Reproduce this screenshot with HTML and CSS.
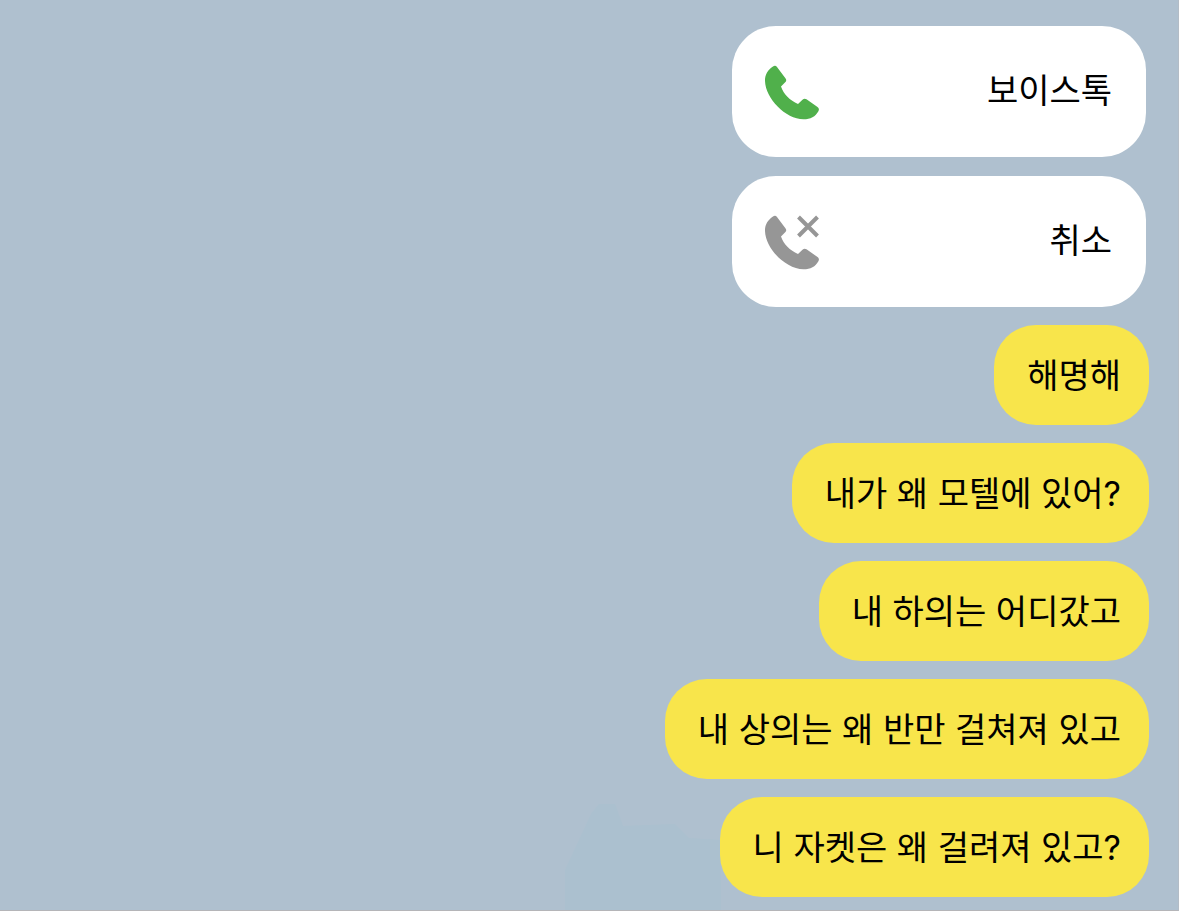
FILE: index.html
```html
<!DOCTYPE html>
<html lang="ko">
<head>
  <meta charset="UTF-8" />
  <meta name="viewport" content="width=device-width, initial-scale=1.0"/>
  <title>채팅</title>

  <link rel="stylesheet" href="styles.css">
</head>
<body>
  <svg class="scenery" viewBox="0 0 156 108" aria-hidden="true">
    <path d="M0 108V68L14 38 26 12 34 2h16l8 22 52-2 14 14 32 2v70z"/>
  </svg>

  <main class="chat">
    <div class="calls">
      <div class="call">
        <svg class="icon green" viewBox="0 0 56 56" aria-hidden="true">
          <path d="M9 1.5C10.5.5 12 .7 13 2l8.600 11.500c1 1.400.8 2.600-.4 3.800L17 21.500C19.500 29 26 35.500 34 39l4.500-4.300c1.300-1.200 2.600-1.200 4-.4L53.500 42c1.600 1.200 1.800 2.600.9 4.200C51.500 51.500 46.500 54.300 39.500 54.300 21.500 54 1.500 33.500 1 16 .8 9.500 4 4.800 9 1.500z"/>
        </svg>
        <span>보이스톡</span>
      </div>
      <div class="call">
        <svg class="icon gray" viewBox="0 0 56 56" aria-hidden="true">
          <path d="M9 1.500C10.500.500 12 .7 13 2l8.600 11.500c1 1.400.8 2.600-.4 3.800L17 21.500C19.500 29 26 35.500 34 39l4.500-4.300c1.300-1.200 2.600-1.200 4-.4L53.500 42c1.600 1.200 1.800 2.600.9 4.200C51.500 51.500 46.500 54.300 39.500 54.300 21.500 54 1.500 33.500 1 16 .8 9.500 4 4.800 9 1.500z"/>
          <path class="cross" d="M34.500 2l19 19M53.500 2l-19 19"/>
        </svg>
        <span>취소</span>
      </div>
    </div>

    <p class="bubble">해명해</p>
    <p class="bubble">내가 왜 모텔에 있어?</p>
    <p class="bubble">내 하의는 어디갔고</p>
    <p class="bubble">내 상의는 왜 반만 걸쳐져 있고</p>
    <p class="bubble">니 자켓은 왜 걸려져 있고?</p>
  </main>
</body>
</html>
```

FILE: styles.css
```css
* {
  box-sizing: border-box;
}

body {
  margin: 0;
  min-height: 100vh;
  position: relative;
  background-color: #afc0cf;
  border-right: 1px solid #b3bcc6;
  border-bottom: 1px solid #b5b5b8;
  color: #000;
  font-family: Inter, "Noto Sans CJK KR", sans-serif;
  font-size: 34px;
  line-height: 48px;
}

/* faint shape of the wallpaper */
.scenery {
  position: absolute;
  bottom: 0;
  left: 48%;
  width: 156px;
  height: 108px;
  fill: #abc0cf;
}

.chat {
  position: relative;
  display: flex;
  flex-direction: column;
  align-items: flex-end;
  gap: 18px;
  padding: 26px 29px 13px;
}

.calls {
  display: flex;
  flex-direction: column;
  gap: 19px;
  width: 414px;
  max-width: 100%;
  margin-right: 3px;
}

.call {
  display: flex;
  align-items: center;
  justify-content: space-between;
  padding: 41px 34px 42px 32px;
  border-radius: 44px;
  background-color: #fff;
}

.icon {
  width: 56px;
  height: 56px;
  margin: -2px 0 -6px;
}

.green {
  fill: #50b04b;
}

.gray {
  fill: #969696;
}

.cross {
  fill: none;
  stroke: #969696;
  stroke-width: 4;
}

.bubble {
  margin: 0;
  padding: 27px 28px 25px 33px;
  border-radius: 42px;
  background-color: #f8e54b;
}
```
